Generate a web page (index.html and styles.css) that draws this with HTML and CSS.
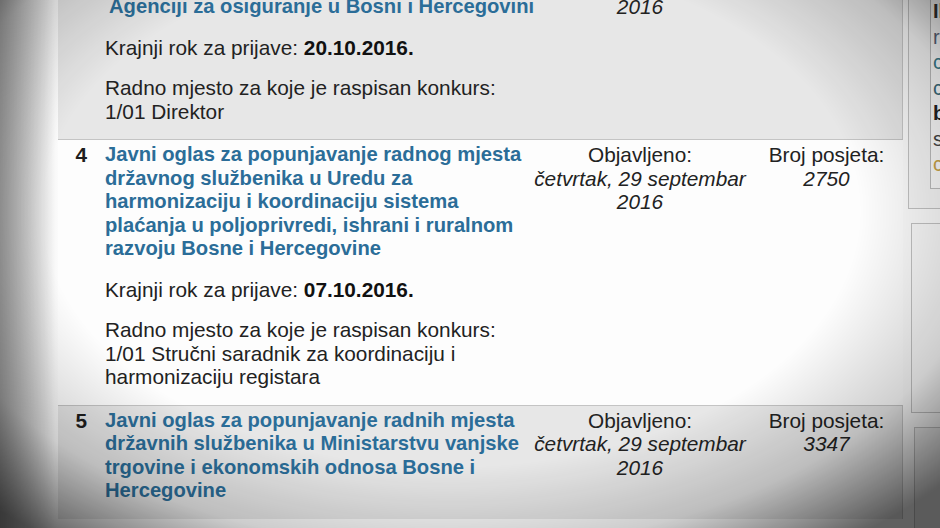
FILE: index.html
```html
<!DOCTYPE html>
<html lang="bs">
<head>
<meta charset="utf-8">
<title>Javni oglasi</title>
<link rel="stylesheet" href="styles.css">
</head>
<body>
<div class="screen">
  <div class="list">
    <div class="row alt first">
      <div class="num"></div>
      <div class="main">
        <a class="title tail" href="#">Agenciji za osiguranje u Bosni i Hercegovini</a>
        <p class="detail">Krajnji rok za prijave: <b>20.10.2016.</b></p>
        <p class="detail">Radno mjesto za koje je raspisan konkurs:<br>1/01 Direktor</p>
      </div>
      <div class="pub"><span class="date">2016</span></div>
      <div class="visits"></div>
    </div>
    <div class="row">
      <div class="num">4</div>
      <div class="main">
        <a class="title" href="#">Javni oglas za popunjavanje radnog mjesta državnog službenika u Uredu za harmonizaciju i koordinaciju sistema plaćanja u poljoprivredi, ishrani i ruralnom razvoju Bosne i Hercegovine</a>
        <p class="detail">Krajnji rok za prijave: <b>07.10.2016.</b></p>
        <p class="detail">Radno mjesto za koje je raspisan konkurs:<br>1/01 Stručni saradnik za koordinaciju i harmonizaciju registara</p>
      </div>
      <div class="pub">Objavljeno:<br><span class="date">četvrtak, 29 septembar 2016</span></div>
      <div class="visits">Broj posjeta:<br><span class="date">2750</span></div>
    </div>
    <div class="row alt">
      <div class="num">5</div>
      <div class="main">
        <a class="title" href="#">Javni oglas za popunjavanje radnih mjesta državnih službenika u Ministarstvu vanjske trgovine i ekonomskih odnosa Bosne i Hercegovine</a>
      </div>
      <div class="pub">Objavljeno:<br><span class="date">četvrtak, 29 septembar 2016</span></div>
      <div class="visits">Broj posjeta:<br><span class="date">3347</span></div>
    </div>
  </div>
  <aside class="side">
    <div class="box box-a">
      <div class="inner">
        <span class="l1">Il</span>
        <span class="l2">r</span>
        <span class="l3">c</span>
        <span class="l4">c</span>
        <span class="l5">b</span>
        <span class="l6">s</span>
        <span class="l7">c</span>
      </div>
    </div>
    <div class="box box-b"></div>
    <div class="box box-c"></div>
  </aside>
  <div class="vignette"></div>
</div>
</body>
</html>
```

FILE: styles.css
```css
html, body {
  margin: 0;
  padding: 0;
  width: 940px;
  height: 528px;
  overflow: hidden;
  background: #f2f2f2;
}

.screen {
  display: flex;
  align-items: flex-start;
  width: 940px;
  height: 528px;
  overflow: hidden;
  padding-left: 58px;
  box-sizing: border-box;
  font-family: "Liberation Sans", Arial, sans-serif;
  font-size: 20.8px;
  line-height: 23.5px;
  color: #222;
  background: linear-gradient(90deg, #cfcfcf 0, #f0f0f0 45px, #fbfbfb 58px);
}

.list {
  width: 845px;
  margin-top: -8px;
  flex: none;
  background: #fdfdfd;
}

.row {
  display: grid;
  grid-template-columns: 47px 425px 220px 153px;
  padding: 3px 0 16px;
  border-top: 1px solid #c4c4c4;
  background: #fdfdfd;
}

.row.first {
  border-top: none;
}

.row.alt {
  background: #e7e7e7;
  border-right: 1px solid #c8c8c8;
}

.num {
  font-weight: bold;
  text-align: right;
  padding-right: 18px;
  color: #1e1e1e;
}

.title {
  display: block;
  font-weight: bold;
  font-size: 20.2px;
  color: #2b6d98;
  text-decoration: none;
}

.title.tail {
  white-space: nowrap;
  padding-left: 4px;
}

.detail {
  margin: 17px 0 0;
}

.detail b {
  color: #111;
}

.pub, .visits {
  text-align: center;
}

.date {
  font-style: italic;
}

.side {
  flex: none;
  width: 40px;
  margin-left: 5px;
  display: flex;
  flex-direction: column;
  gap: 14px;
  margin-top: -10px;
}

.box {
  border: 1px solid #c2c2c2;
  border-right: none;
  background: #f6f6f6;
}

.box-a {
  height: 217px;
  padding-left: 21px;
}

.box-a .inner {
  height: 189px;
  border: 1px solid #bdbdbd;
  border-right: none;
  border-top: none;
  background: #fbfbfb;
  overflow: hidden;
  display: flex;
  flex-direction: column;
  padding-left: 2px;
  padding-top: 8px;
  font-size: 20px;
  line-height: 25.5px;
  white-space: nowrap;
}

.l1 { color: #333; font-weight: bold; }
.l2 { color: #5a6478; }
.l3 { color: #3b7c8c; }
.l4 { color: #3a6a7a; }
.l5 { color: #222; font-weight: bold; }
.l6 { color: #444; }
.l7 { color: #c8a347; }

.box-b {
  height: 188px;
  margin-left: 3px;
  background: #f9f9f9;
}

.box-c {
  height: 140px;
  margin-left: 6px;
  background: #eeeeee;
}

.vignette {
  position: fixed;
  inset: 0;
  pointer-events: none;
  background:
    radial-gradient(ellipse 70% 78% at 48% 40%, rgba(0,0,0,0) 62%, rgba(0,0,0,0.18) 82%, rgba(0,0,0,0.62) 100%),
    linear-gradient(90deg, rgba(0,0,0,0.28) 0, rgba(0,0,0,0) 55px);
}
```
